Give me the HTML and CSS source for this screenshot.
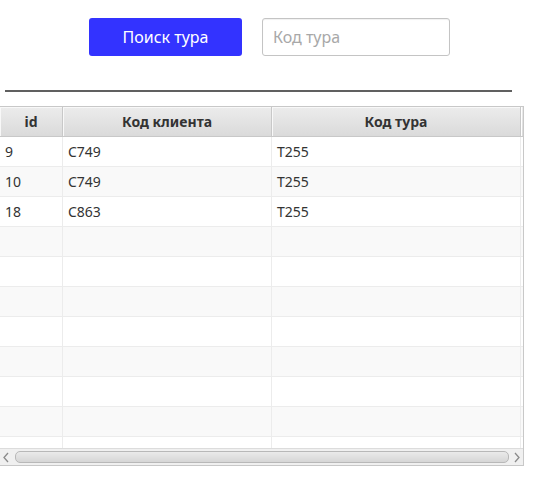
FILE: index.html
```html
<!DOCTYPE html>
<html lang="ru">
<head>
<meta charset="utf-8">
<link rel="stylesheet" href="styles.css">
</head>
<body>
<div class="toolbar">
  <button class="btn">Поиск тура</button>
  <input class="field" type="text" placeholder="Код тура">
</div>
<div class="sep"></div>
<div class="table">
  <div class="head">
    <div class="hc c1">id</div>
    <div class="hc c2">Код клиента</div>
    <div class="hc c3">Код тура</div>
    <div class="hfill"></div>
  </div>
  <div class="body">
    <div class="row"><div class="cell c1">9</div><div class="cell c2">C749</div><div class="cell c3">T255</div></div>
    <div class="row odd"><div class="cell c1">10</div><div class="cell c2">C749</div><div class="cell c3">T255</div></div>
    <div class="row"><div class="cell c1">18</div><div class="cell c2">C863</div><div class="cell c3">T255</div></div>
    <div class="row odd"><div class="cell c1"></div><div class="cell c2"></div><div class="cell c3"></div></div>
    <div class="row"><div class="cell c1"></div><div class="cell c2"></div><div class="cell c3"></div></div>
    <div class="row odd"><div class="cell c1"></div><div class="cell c2"></div><div class="cell c3"></div></div>
    <div class="row"><div class="cell c1"></div><div class="cell c2"></div><div class="cell c3"></div></div>
    <div class="row odd"><div class="cell c1"></div><div class="cell c2"></div><div class="cell c3"></div></div>
    <div class="row"><div class="cell c1"></div><div class="cell c2"></div><div class="cell c3"></div></div>
    <div class="row odd"><div class="cell c1"></div><div class="cell c2"></div><div class="cell c3"></div></div>
    <div class="row"><div class="cell c1"></div><div class="cell c2"></div><div class="cell c3"></div></div>
  </div>
  <div class="hscroll">
    <svg class="arrow" width="12" height="17" viewBox="0 0 12 17"><path d="M8 4 L4 8.5 L8 13" fill="none" stroke="#8a8a8a" stroke-width="1.3"/></svg>
    <div class="thumb"></div>
    <svg class="arrow" width="12" height="17" viewBox="0 0 12 17"><path d="M4 4 L8 8.5 L4 13" fill="none" stroke="#8a8a8a" stroke-width="1.3"/></svg>
  </div>
</div>
</body>
</html>
```
FILE: styles.css
```css
* { box-sizing: border-box; }
body {
  margin: 0;
  background: #fff;
  font-family: "Noto Sans", "Open Sans", sans-serif;
  color: #333;
}
.toolbar {
  display: flex;
  gap: 20px;
  padding: 18px 0 0 89px;
  height: 56px;
}
.btn {
  width: 153px;
  height: 38px;
  background: #3333ff;
  color: #fff;
  border: none;
  border-radius: 3px;
  font-family: inherit;
  font-size: 16px;
  padding: 0;
}
.field {
  width: 188px;
  height: 38px;
  border: 1px solid #c4c4c4;
  border-radius: 3px;
  padding: 0 10px;
  font-family: inherit;
  font-size: 16px;
  color: #333;
  box-shadow: inset 0 1px 1px rgba(0,0,0,0.06);
}
.field::placeholder { color: #a8a8a8; }
.sep {
  margin: 34px 0 0 5px;
  width: 507px;
  height: 2px;
  background: #606060;
}
.table {
  margin-top: 14px;
  width: 524px;
  height: 360px;
  border: 1px solid #c8c8c8;
  border-left: none;
  display: flex;
  flex-direction: column;
  font-size: 14px;
}
.head {
  display: flex;
  height: 30px;
  flex: none;
  border-bottom: 1px solid #c8c8c8;
}
.hc {
  background: linear-gradient(#ececec, #dadada);
  border-right: 1px solid #c8c8c8;
  box-shadow: inset 1px 1px 0 #f8f8f8;
  font-weight: bold;
  text-align: center;
  line-height: 29px;
  color: #333;
}
.hfill {
  flex: 1;
  background: linear-gradient(#ececec, #dadada);
  border-left: 1px solid #fff;
}
.c1 { width: 63px; }
.c2 { width: 209px; }
.c3 { width: 249px; }
.body {
  flex: 1;
  overflow: hidden;
}
.row {
  display: flex;
  height: 30px;
  border-bottom: 1px solid #ececec;
  background: #fff;
}
.row.odd { background: #f9f9f9; }
.cell {
  border-right: 1px solid #ececec;
  padding-left: 5px;
  line-height: 29px;
}
.hscroll {
  flex: none;
  height: 17px;
  display: flex;
  align-items: center;
  background: #f0f0f0;
  border-top: 1px solid #dcdcdc;
}
.arrow { flex: none; }
.thumb {
  flex: 1;
  height: 12px;
  margin: 0 2px 0 3px;
  border: 1px solid #b8b8b8;
  border-radius: 5px;
  background: linear-gradient(#eaeaea, #d6d6d6);
}
```
